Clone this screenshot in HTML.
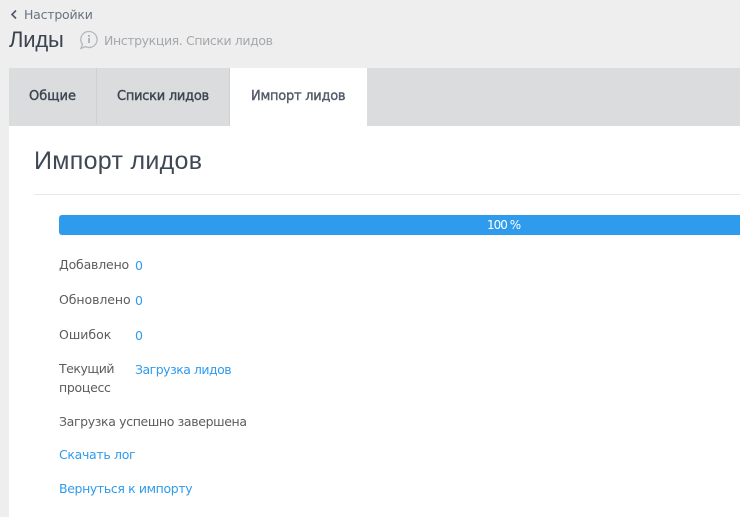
<!DOCTYPE html>
<html><head><meta charset="utf-8"><style>
html,body{margin:0;padding:0}
body{width:740px;height:517px;background:#eeeeee;overflow:hidden;position:relative;font-family:"DejaVu Sans","Liberation Sans",sans-serif;color:#535c69}
.t{position:absolute;white-space:nowrap;line-height:18px;font-size:12.5px}
.b{position:absolute}
.l{color:#2f9bed}
.g{color:#5c5c5c}
.s{font-size:13px;-webkit-text-stroke:.4px currentColor}
</style></head><body>
<svg class="b" style="left:9px;top:9px" width="10" height="11"><path d="M7 1.5L3 5.5L7 9.5" fill="none" stroke="#535c69" stroke-width="1.7"/></svg>
<div class="t" style="left:24px;top:6px;color:#6a737f;letter-spacing:-.22px">Настройки</div>
<div class="t" style="left:9px;top:28px;font-size:22px;line-height:24px;color:#3a4350;letter-spacing:-.2px;font-family:'Liberation Sans',sans-serif">Лиды</div>
<svg class="b" style="left:79px;top:30px" width="20" height="20"><path d="M10 1.5a8 8 0 1 1-3.6 15.1L2 18.5l1.4-4.2A8 8 0 0 1 10 1.5z" fill="none" stroke="#b5b8bb" stroke-width="1.3"/><rect x="9.2" y="5" width="1.6" height="1.8" fill="#a5a8ab"/><rect x="9.2" y="8" width="1.6" height="5" fill="#a5a8ab"/></svg>
<div class="t" style="left:104px;top:32px;color:#a4a8ac;letter-spacing:-.39px">Инструкция. Списки лидов</div>
<div class="b" style="left:9px;top:68px;width:731px;height:58px;background:#dbdcde"></div>
<div class="b" style="left:96px;top:68px;width:1px;height:56px;background:#cfd0d2"></div>
<div class="b" style="left:229px;top:68px;width:1px;height:58px;background:#cfd0d2"></div>
<div class="b" style="left:9px;top:126px;width:731px;height:391px;background:#fff"></div>
<div class="b" style="left:230px;top:68px;width:137px;height:58px;background:#fff"></div>
<div class="t s" style="left:29px;top:88px;color:#3d4652">Общие</div>
<div class="t s" style="left:117px;top:88px;color:#3d4652;letter-spacing:-.25px">Списки лидов</div>
<div class="t s" style="left:251px;top:88px;color:#535c69;letter-spacing:-.25px">Импорт лидов</div>
<div class="t" style="left:34px;top:146px;font-size:25px;line-height:30px;color:#3f4854;font-family:'Liberation Sans',sans-serif;letter-spacing:.3px">Импорт лидов</div>
<div class="b" style="left:34px;top:194px;width:706px;height:1px;background:#e6e8ea"></div>
<div class="b" style="left:59px;top:215px;width:681px;height:20px;background:#2f9bed;border-radius:3px 0 0 3px"></div>
<div class="t" style="left:487px;top:216px;color:#fff;font-size:12px;letter-spacing:-1px">100 %</div>
<div class="t g" style="left:59px;top:256px;letter-spacing:-.18px">Добавлено</div>
<div class="t l" style="left:135px;top:257px">0</div>
<div class="t g" style="left:59px;top:291px;letter-spacing:-.07px">Обновлено</div>
<div class="t l" style="left:135px;top:292px">0</div>
<div class="t g" style="left:59px;top:326px">Ошибок</div>
<div class="t l" style="left:135px;top:327px">0</div>
<div class="t g" style="left:59px;top:360px;letter-spacing:-.47px">Текущий</div>
<div class="t g" style="left:59px;top:379px;letter-spacing:-.3px">процесс</div>
<div class="t l" style="left:135px;top:361px;letter-spacing:-.5px">Загрузка лидов</div>
<div class="t g" style="left:59px;top:413px;letter-spacing:-.36px">Загрузка успешно завершена</div>
<div class="t l" style="left:59px;top:446px;letter-spacing:-.32px">Скачать лог</div>
<div class="t l" style="left:59px;top:480px;letter-spacing:-.37px">Вернуться к импорту</div>
</body></html>
